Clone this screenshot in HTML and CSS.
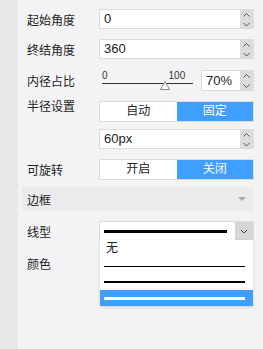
FILE: index.html
```html
<!DOCTYPE html>
<html lang="zh">
<head>
    <meta charset="UTF-8">
    <title>环形图设置</title>
    <link rel="stylesheet" href="styles.css">
</head>
<body>
    <div class="strip"></div>
    <div class="panel">
        <div class="row r-start">
            <span class="label">起始角度</span>
            <div class="num">
                <span class="val">0</span>
                <div class="spin"><svg width="13" height="18" viewBox="0 0 13 18"><polyline points="3.5,6.5 6.5,3.5 9.5,6.5"/><polyline points="3.5,13 6.5,16 9.5,13"/></svg></div>
            </div>
        </div>
        <div class="row r-end">
            <span class="label">终结角度</span>
            <div class="num">
                <span class="val">360</span>
                <div class="spin"><svg width="13" height="18" viewBox="0 0 13 18"><polyline points="3.5,6.5 6.5,3.5 9.5,6.5"/><polyline points="3.5,13 6.5,16 9.5,13"/></svg></div>
            </div>
        </div>
        <div class="row r-inner">
            <span class="label">内径占比</span>
            <div class="slider">
                <div class="ticks"><span>0</span><span class="max">100</span></div>
                <div class="track"></div>
                <svg class="thumb" width="10" height="9" viewBox="0 0 10 9"><polygon points="5,0.5 9.5,8.5 0.5,8.5"/></svg>
            </div>
            <div class="num pct">
                <span class="val">70%</span>
                <div class="spin"><svg width="13" height="19" viewBox="0 0 13 19"><polyline points="3.5,6.5 6.5,3.5 9.5,6.5"/><polyline points="3.5,13.5 6.5,16.5 9.5,13.5"/></svg></div>
            </div>
        </div>
        <div class="row r-radius">
            <span class="label top">半径设置</span>
            <div class="seg">
                <span>自动</span>
                <span class="on">固定</span>
            </div>
        </div>
        <div class="row r-px">
            <span class="label"></span>
            <div class="num">
                <span class="val">60px</span>
                <div class="spin"><svg width="13" height="18" viewBox="0 0 13 18"><polyline points="3.5,6.5 6.5,3.5 9.5,6.5"/><polyline points="3.5,13 6.5,16 9.5,13"/></svg></div>
            </div>
        </div>
        <div class="row r-rotate">
            <span class="label">可旋转</span>
            <div class="seg">
                <span>开启</span>
                <span class="on">关闭</span>
            </div>
        </div>
        <div class="group">
            <span>边框</span>
            <i class="caret"></i>
        </div>
        <div class="row r-line">
            <span class="label">线型</span>
            <div class="select">
                <div class="current"><i class="line w3"></i></div>
                <div class="arrow"><svg width="8" height="5" viewBox="0 0 8 5"><polyline points="1,1 4,4 7,1"/></svg></div>
                <ul class="menu">
                    <li>无</li>
                    <li><i class="line w1"></i></li>
                    <li><i class="line w2"></i></li>
                    <li class="sel"><i class="line w3"></i></li>
                </ul>
            </div>
        </div>
        <div class="row r-color">
            <span class="label">颜色</span>
        </div>
    </div>
</body>
</html>
```

FILE: styles.css
```css
body {
    margin: 0;
    display: flex;
    height: 100vh;
    overflow: hidden;
    background: #f3f3f5;
    font-family: "Liberation Sans", "Noto Sans CJK SC", sans-serif;
    font-size: 12px;
    color: #222;
}
.strip {
    width: 18px;
    flex: none;
    background: #e8e8e8;
}
.panel {
    flex: 1;
    padding: 9px 9px 0 4px;
}
.row {
    display: flex;
    align-items: center;
    height: 20px;
    margin-bottom: 10px;
}
.r-end { margin-bottom: 11px; }
.r-inner { height: 21px; }
.r-radius { height: 21px; margin-bottom: 7px; align-items: flex-start; }
.r-rotate { height: 21px; margin-bottom: 7px; }
.r-line { height: 20px; margin-bottom: 12px; }
.label {
    width: 77px;
    flex: none;
    padding-left: 5px;
    box-sizing: border-box;
}
.label.top { line-height: 13px; }
.num {
    flex: 1;
    height: 100%;
    display: flex;
    background: #fff;
    border: 1px solid #dcdcdc;
    box-sizing: border-box;
}
.num .val {
    flex: 1;
    padding-left: 4px;
    font-size: 13px;
    line-height: 18px;
}
.spin {
    width: 13px;
    background: #dcdcdf;
    display: flex;
    align-items: center;
}
.spin svg polyline,
.arrow svg polyline {
    fill: none;
    stroke: #555;
    stroke-width: 1;
}
.slider {
    position: relative;
    width: 94px;
    height: 100%;
    margin-right: 8px;
}
.ticks {
    display: flex;
    padding: 0 0 0 3px;
    font-size: 10px;
    line-height: 11px;
    color: #333;
}
.ticks .max { margin-left: 61px; }
.track {
    margin: 2px 0 0 3px;
    height: 1px;
    background: #333;
}
.thumb {
    position: absolute;
    left: 61px;
    top: 11px;
}
.thumb polygon {
    fill: #fff;
    stroke: #888;
}
.pct { flex: none; width: 53px; }
.pct .val { line-height: 19px; }
.seg {
    flex: 1;
    height: 100%;
    display: flex;
    border: 1px solid #dcdcdc;
    box-sizing: border-box;
    background: #fff;
    font-size: 12px;
}
.seg span {
    flex: 1;
    text-align: center;
    line-height: 19px;
}
.seg .on {
    background: #409eff;
    color: #fff;
}
.group {
    height: 24px;
    margin-bottom: 10px;
    display: flex;
    align-items: center;
    justify-content: space-between;
    padding: 0 8px 0 5px;
    background: #ebebed;
}
.caret {
    width: 0;
    height: 0;
    border-left: 4px solid transparent;
    border-right: 4px solid transparent;
    border-top: 4px solid #aaa;
}
.select {
    position: relative;
    flex: 1;
    height: 100%;
    display: flex;
    background: #fff;
    border: 1px solid #dcdcdc;
    box-sizing: border-box;
}
.current {
    flex: 1;
    display: flex;
    align-items: center;
    padding: 0 8px 0 4px;
}
.line {
    display: block;
    width: 100%;
    background: #000;
}
.line.w1 { height: 1px; }
.line.w2 { height: 2px; }
.line.w3 { height: 3px; }
.arrow {
    width: 18px;
    background: #d6d6d9;
    display: flex;
    align-items: center;
    justify-content: center;
}
.arrow svg polyline { stroke: #444; }
.menu {
    position: absolute;
    top: 100%;
    left: 0;
    right: 0;
    margin: 0;
    padding: 0;
    list-style: none;
    background: #fff;
    box-shadow: 0 1px 3px rgba(0, 0, 0, 0.15);
}
.menu li {
    height: 16px;
    padding: 0 8px 0 4px;
    display: flex;
    align-items: center;
}
.menu li:first-child {
    height: 18px;
    align-items: flex-start;
    line-height: 16px;
    font-size: 12px;
    padding-left: 6px;
}
.menu .sel { background: #409eff; }
.menu .sel .line { background: #fff; }
```
